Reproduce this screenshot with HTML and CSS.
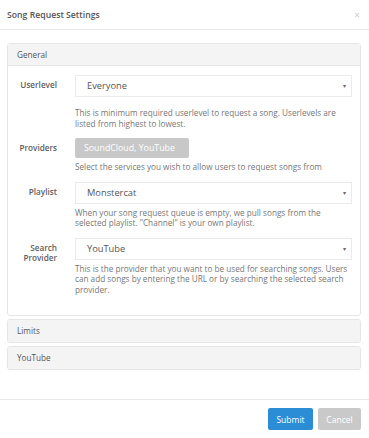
FILE: index.html
```html
<!DOCTYPE html>
<html lang="en">
<head>
  <meta charset="UTF-8" />
  <title>Song Request Settings</title>
  <link rel="stylesheet" href="styles.css">
</head>
<body>
  <div class="modal">
    <div class="modal-header">
      <span class="modal-title">Song Request Settings</span>
      <span class="close">&times;</span>
    </div>

    <div class="modal-body">
      <div class="panel">
        <div class="panel-heading">General</div>
        <div class="panel-body">
          <div class="form-group">
            <label>Userlevel</label>
            <div class="field">
              <div class="select">Everyone<span class="caret">&#9662;</span></div>
              <p class="help help-first">This is minimum required userlevel to request a song. Userlevels are listed from highest to lowest.</p>
            </div>
          </div>

          <div class="form-group">
            <label>Providers</label>
            <div class="field">
              <div class="multi">SoundCloud, YouTube</div>
              <p class="help">Select the services you wish to allow users to request songs from</p>
            </div>
          </div>

          <div class="form-group">
            <label>Playlist</label>
            <div class="field">
              <div class="select">Monstercat<span class="caret">&#9662;</span></div>
              <p class="help">When your song request queue is empty, we pull songs from the selected playlist. "Channel" is your own playlist.</p>
            </div>
          </div>

          <div class="form-group">
            <label>Search Provider</label>
            <div class="field">
              <div class="select">YouTube<span class="caret">&#9662;</span></div>
              <p class="help">This is the provider that you want to be used for searching songs. Users can add songs by entering the URL or by searching the selected search provider.</p>
            </div>
          </div>
        </div>
      </div>

      <div class="panel panel-closed">
        <div class="panel-heading">Limits</div>
      </div>
      <div class="panel panel-closed">
        <div class="panel-heading">YouTube</div>
      </div>
    </div>

    <div class="modal-footer">
      <button class="btn btn-primary">Submit</button>
      <button class="btn btn-default">Cancel</button>
    </div>
  </div>
</body>
</html>
```

FILE: styles.css
```css
body {
  margin: 0;
  background: #fff;
  font-family: "Open Sans", sans-serif;
  font-size: 8.2px;
  color: #555;
}

.modal {
  height: 438px;
  display: flex;
  flex-direction: column;
}

.modal-header {
  height: 30px;
  box-sizing: border-box;
  border-bottom: 1px solid #e8e8e8;
  display: flex;
  align-items: center;
  justify-content: space-between;
  padding: 0 9px 0 7px;
}

.modal-title {
  font-size: 8.7px;
  font-weight: 600;
  color: #555;
}

.close {
  font-size: 10px;
  color: #ccc;
}

.modal-body {
  flex: 1;
  padding: 13px 8px 0 7px;
}

.panel {
  border: 1px solid #e6e6e6;
  border-radius: 3px;
  margin-bottom: 3px;
  background: #fff;
}

.panel-heading {
  background: #f4f4f4;
  height: 21px;
  line-height: 21px;
  padding: 0 9px;
  color: #555;
  border-bottom: 1px solid #e6e6e6;
}

.panel-closed .panel-heading {
  height: 22px;
  line-height: 22px;
  border-bottom: none;
  border-radius: 3px;
}

.panel-body {
  padding: 9px 8px 20px 0;
}

.form-group {
  display: grid;
  grid-template-columns: 49px 1fr;
  column-gap: 18px;
  margin-bottom: 9px;
}

.form-group:last-child {
  margin-bottom: 0;
}

.form-group label {
  text-align: right;
  font-weight: 600;
  color: #606060;
  padding-top: 5px;
  line-height: 10.5px;
}

.select {
  position: relative;
  height: 20px;
  line-height: 20px;
  border: 1px solid #ebebeb;
  padding: 0 11px;
  color: #555;
  font-size: 9.3px;
}

.caret {
  position: absolute;
  right: 5px;
  top: 0;
  font-size: 6px;
  color: #666;
}

.multi {
  display: inline-block;
  height: 20px;
  line-height: 20px;
  width: 114px;
  box-sizing: border-box;
  padding: 0 9px;
  background: #c8c8c8;
  color: #fff;
  border-radius: 2px;
  font-size: 8.8px;
}

.help {
  margin: 4px 0 0;
  line-height: 10.5px;
  color: #777;
}

.help-first {
  margin-top: 11px;
}

.modal-footer {
  border-top: 1px solid #e8e8e8;
  height: 39px;
  display: flex;
  justify-content: flex-end;
  align-items: flex-start;
  gap: 5px;
  padding: 8px 8px 0 0;
  box-sizing: border-box;
}

.btn {
  border: none;
  border-radius: 2px;
  height: 22px;
  padding: 0;
  font-family: "Open Sans", sans-serif;
  font-size: 8.5px;
  color: #fff;
}

.btn-primary {
  background: #2a8dd6;
  width: 45px;
}

.btn-default {
  background: #c9c9c9;
  width: 43px;
}
```
